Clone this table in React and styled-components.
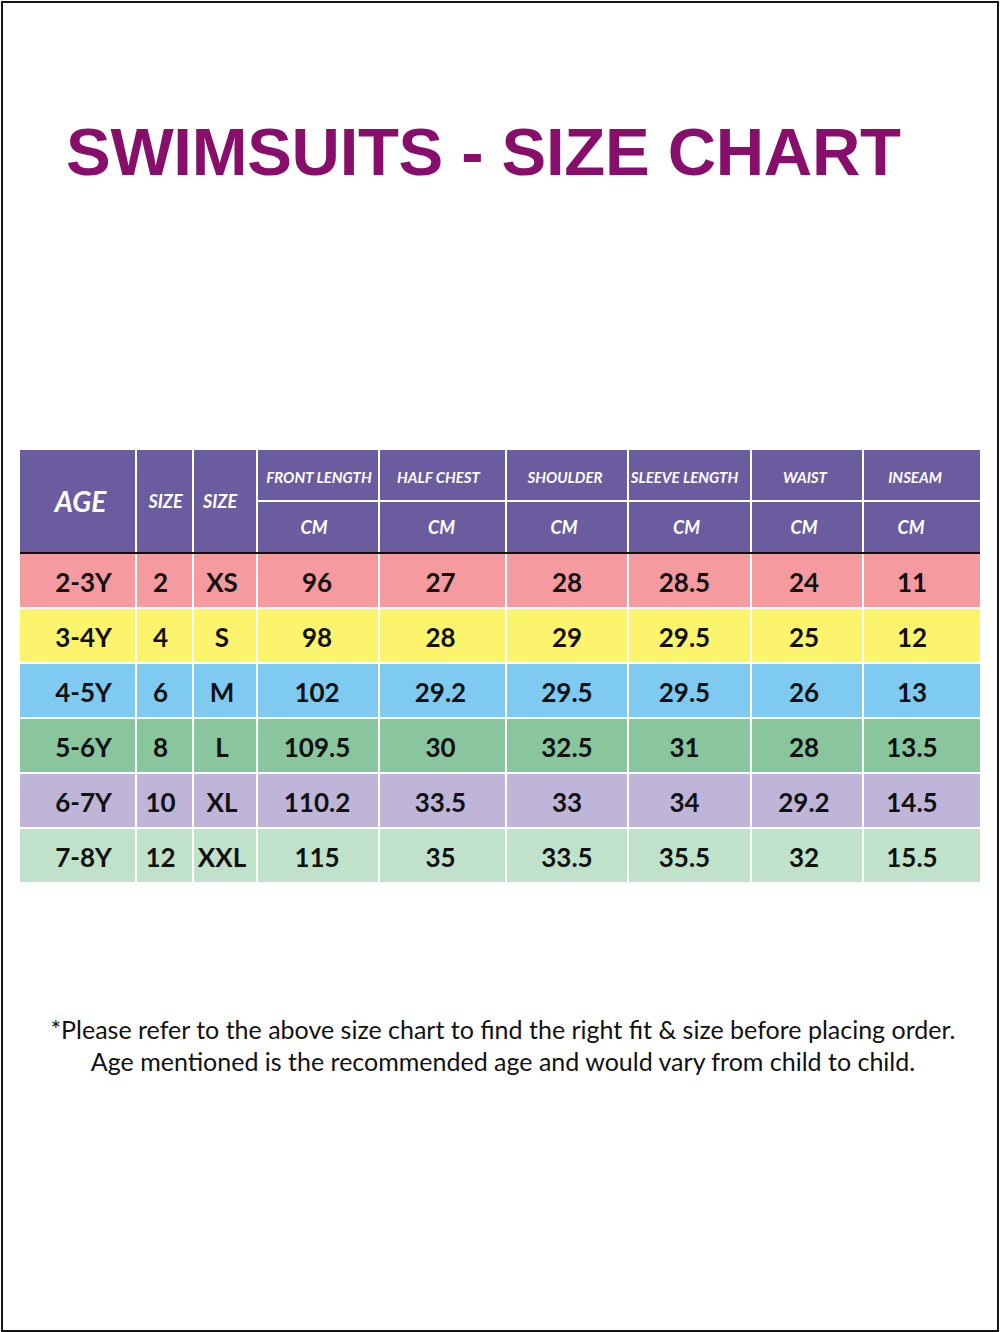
import React from "react";
import styled, { createGlobalStyle } from "styled-components";

const Global = createGlobalStyle`
  html, body { margin: 0; padding: 0; background: #fff; }
  * { box-sizing: border-box; }
`;

const Page = styled.div`
  width: 1000px;
  height: 1332px;
  padding: 1px 1px 0 1px;
  background: #fff;
`;

const Frame = styled.div`
  height: 100%;
  border: 2px solid #151515;
  display: flex;
  flex-direction: column;
  align-items: stretch;
`;

const Title = styled.h1`
  margin: 109px 0 0 0;
  padding-left: 63px;
  font-family: "Liberation Sans", Arial, sans-serif;
  font-weight: 700;
  font-size: 67px;
  line-height: 80px;
  letter-spacing: -0.3px;
  color: #880e6c;
  white-space: nowrap;
`;

const COLS = "115px 55px 62px 120px 125px 120px 121px 110px 116px";

const Table = styled.div`
  margin: 258px 0 0 17px;
  width: 960px;
  display: flex;
  flex-direction: column;
  background: #fff;
`;

const HeadGrid = styled.div`
  display: grid;
  grid-template-columns: ${COLS};
  grid-template-rows: 50px 50px;
  gap: 2px;
  background: #fff;
`;

const shift = (dx) =>
  dx >= 0 ? `padding-left: ${dx * 2}px;` : `padding-right: ${-dx * 2}px;`;

const HeadCell = styled.div`
  background: #6b5c9f;
  color: #fff;
  font-family: Lato, "Open Sans", sans-serif;
  font-weight: 700;
  font-style: italic;
  font-size: ${(p) => p.$size}px;
  display: flex;
  align-items: center;
  justify-content: center;
  white-space: nowrap;
  grid-row: ${(p) => (p.$span ? "1 / span 2" : "auto")};
  padding-top: ${(p) => p.$pt || 0}px;
  ${(p) => shift(p.$dx || 0)}
`;

const Divider = styled.div`
  height: 2px;
  background: #111;
`;

const BodyGrid = styled.div`
  display: grid;
  grid-template-columns: ${COLS};
  grid-auto-rows: 53px;
  gap: 2px;
  background: #fff;
`;

const Cell = styled.div`
  background: ${(p) => p.$bg};
  color: #111;
  font-family: Lato, "Open Sans", sans-serif;
  font-weight: 700;
  font-size: 26px;
  display: flex;
  align-items: center;
  justify-content: center;
  padding-top: 3px;
  white-space: nowrap;
  ${(p) => shift(p.$dx || 0)}
`;

const Footer = styled.div`
  margin-top: 131px;
  display: flex;
  flex-direction: column;
  align-items: center;
  padding-left: 6px;
  font-family: Lato, "Open Sans", sans-serif;
  font-size: 25px;
  line-height: 32px;
  color: #111;
`;

const Line = styled.div`
  white-space: nowrap;
`;

const heads = [
  { t: "FRONT LENGTH", dx: 1, cm: -4 },
  { t: "HALF CHEST", dx: -4, cm: -1 },
  { t: "SHOULDER", dx: -2, cm: -3 },
  { t: "SLEEVE LENGTH", dx: -5, cm: -3 },
  { t: "WAIST", dx: -2, cm: -3 },
  { t: "INSEAM", dx: -7, cm: -11 },
];

const bodyShift = [6, -4, -3, -1, -2, 0, -5, -3, -10];

const rows = [
  { bg: "#f59a9f", v: ["2-3Y", "2", "XS", "96", "27", "28", "28.5", "24", "11"] },
  { bg: "#fdf46e", v: ["3-4Y", "4", "S", "98", "28", "29", "29.5", "25", "12"] },
  { bg: "#7ecaf0", v: ["4-5Y", "6", "M", "102", "29.2", "29.5", "29.5", "26", "13"] },
  { bg: "#89c59d", v: ["5-6Y", "8", "L", "109.5", "30", "32.5", "31", "28", "13.5"] },
  { bg: "#beb5d8", v: ["6-7Y", "10", "XL", "110.2", "33.5", "33", "34", "29.2", "14.5"] },
  { bg: "#c0e2cb", v: ["7-8Y", "12", "XXL", "115", "35", "33.5", "35.5", "32", "15.5"] },
];

export default function App() {
  return (
    <Page>
      <Global />
      <Frame>
        <Title>SWIMSUITS - SIZE CHART</Title>
        <Table>
          <HeadGrid>
            <HeadCell $span $size={28} $dx={3}>AGE</HeadCell>
            <HeadCell $span $size={18} $dx={1} $pt={0}>SIZE</HeadCell>
            <HeadCell $span $size={18} $dx={-5} $pt={0}>SIZE</HeadCell>
            {heads.map((h) => (
              <HeadCell key={h.t} $size={15} $dx={h.dx} $pt={4}>{h.t}</HeadCell>
            ))}
            {heads.map((h) => (
              <HeadCell key={h.t + "cm"} $size={18} $dx={h.cm}>CM</HeadCell>
            ))}
          </HeadGrid>
          <Divider />
          <BodyGrid>
            {rows.map((r, i) =>
              r.v.map((val, j) => (
                <Cell key={i + "-" + j} $bg={r.bg} $dx={bodyShift[j]}>{val}</Cell>
              ))
            )}
          </BodyGrid>
        </Table>
        <Footer>
          <Line>*Please refer to the above size chart to find the right fit &amp; size before placing order.</Line>
          <Line>Age mentioned is the recommended age and would vary from child to child.</Line>
        </Footer>
      </Frame>
    </Page>
  );
}
